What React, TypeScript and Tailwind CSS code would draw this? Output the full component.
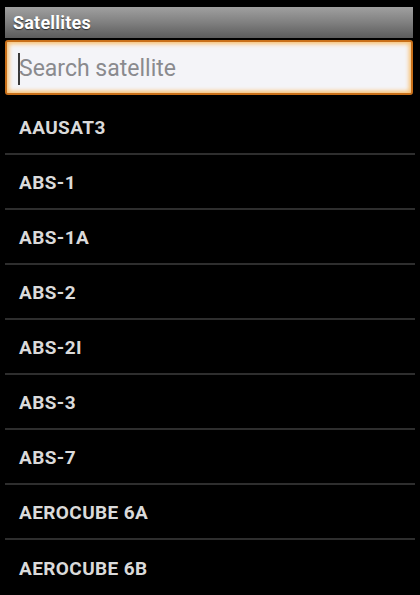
import React from "react";

const items = [
  "AAUSAT3",
  "ABS-1",
  "ABS-1A",
  "ABS-2",
  "ABS-2I",
  "ABS-3",
  "ABS-7",
  "AEROCUBE 6A",
  "AEROCUBE 6B",
];

export default function App() {
  return (
    <div
      className="w-[420px] h-[595px] bg-black overflow-hidden flex flex-col px-[5px] pt-[7px]"
      style={{ fontFamily: "Roboto, 'Liberation Sans', sans-serif" }}
    >
      <div className="h-[31px] shrink-0 bg-gradient-to-b from-[#a0a0a0] via-[#808080] to-[#5c5c5c] flex items-center pl-[8px] mr-[2px]">
        <span className="text-[18px] font-bold text-white tracking-[0.2px] [text-shadow:0_1px_1px_rgba(0,0,0,0.6)]">
          Satellites
        </span>
      </div>
      <div className="mt-[2px] h-[55px] shrink-0 mr-[2px] rounded-[3px] border-2 border-[#c9701a] bg-[#f4f4f8] shadow-[inset_0_0_4px_2px_#f9c070] flex items-center pl-[11px] pt-[2px]">
        <div className="w-[2px] h-[32px] bg-[#3a3a3a]" />
        <span className="text-[23px] text-[#8a8a8e] leading-none -ml-[1px]">Search satellite</span>
      </div>
      <div className="mt-[5px] flex flex-col">
        {items.map((it, i) => (
          <div
            key={it}
            className={
              "h-[55px] shrink-0 flex items-center pl-[14px] pt-[3px] " +
              (i < items.length - 1 ? "border-b-2 border-[#2e2e2e]" : "")
            }
          >
            <span className="text-[19px] font-bold text-[#dadada] tracking-[0.4px]">{it}</span>
          </div>
        ))}
      </div>
    </div>
  );
}
